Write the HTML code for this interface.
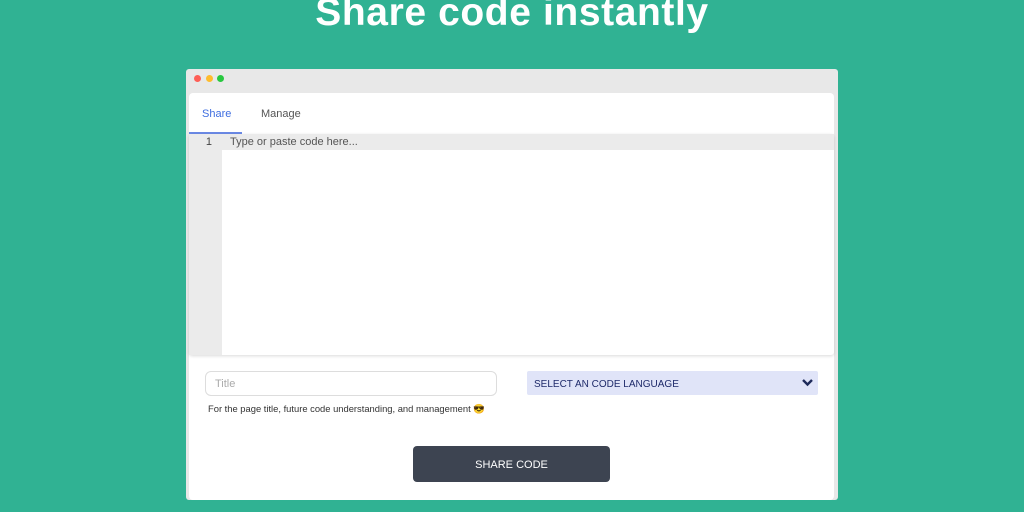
<!DOCTYPE html>
<html><head><style>
body{margin:0;width:1024px;height:512px;background:#30b293;overflow:hidden;position:relative;font-family:"Liberation Sans",sans-serif}
.h{position:absolute;top:-9px;left:0;width:1024px;text-align:center;color:#fff;font-weight:bold;font-size:39px;letter-spacing:0.6px}
.win{position:absolute;left:186px;top:69px;width:652px;height:431px;background:#e8e8e8;border-radius:3px}
.dot{position:absolute;top:6px;width:7px;height:7px;border-radius:50%}
.card{position:absolute;left:3px;top:24px;width:645px;height:407px;background:#fff;border-radius:4px}
.tab{position:absolute;top:14px;font-size:11px;color:#555}
.ed{position:absolute;left:0;top:41px;width:645px;height:221px;background:#fff;box-shadow:0 1px 3px rgba(0,0,0,.15);border-radius:3px}
.gut{position:absolute;left:0;top:0;width:33px;height:221px;background:#ebebeb}
.l1{position:absolute;left:33px;top:0;right:0;height:16px;background:#ebebeb;font-size:11px;color:#555;line-height:17px;padding-left:8px}
</style></head><body>
<div class="h">Share code instantly</div>
<div class="win">
<div class="dot" style="left:8px;background:#fe5f57"></div>
<div class="dot" style="left:20px;background:#febc2e"></div>
<div class="dot" style="left:31px;background:#28c840"></div>
<div class="card">
<div class="tab" style="left:13px;color:#3f6ee0;top:15px">Share</div>
<div style="position:absolute;left:0;top:39px;width:53px;height:2px;background:#6b8ae6"></div>
<div class="tab" style="left:72px;top:15px">Manage</div>
<div class="ed"><div class="gut"><div style="font-size:11px;color:#444;text-align:right;padding-right:10px;line-height:17px">1</div></div><div class="l1">Type or paste code here...</div></div>
<div style="position:absolute;left:16px;top:278px;height:23px;border:1px solid #ddd;border-radius:6px;font-size:11px;color:#aaa;line-height:24px;padding-left:9px;width:281px">Title</div>
<div style="position:absolute;left:19px;top:310px;font-size:9.4px;color:#333">For the page title, future code understanding, and management 😎</div>
<div style="position:absolute;left:338px;top:278px;width:291px;height:24px;background:#e0e4f8;border-radius:2px;font-size:10px;color:#1e2a6a;line-height:28px;padding-left:7px;box-sizing:border-box">SELECT AN CODE LANGUAGE<svg style="position:absolute;right:5px;top:7px" width="11" height="9" viewBox="0 0 11 9"><path d="M1 2l4.5 4.5L10 2" stroke="#1e2a5a" stroke-width="2.4" fill="none"/></svg></div>
<div style="position:absolute;left:224px;top:353px;width:197px;height:36px;background:#3d4451;border-radius:4px;color:#fff;font-size:11px;text-align:center;line-height:38px">SHARE CODE</div>
</div></div>
</body></html>
